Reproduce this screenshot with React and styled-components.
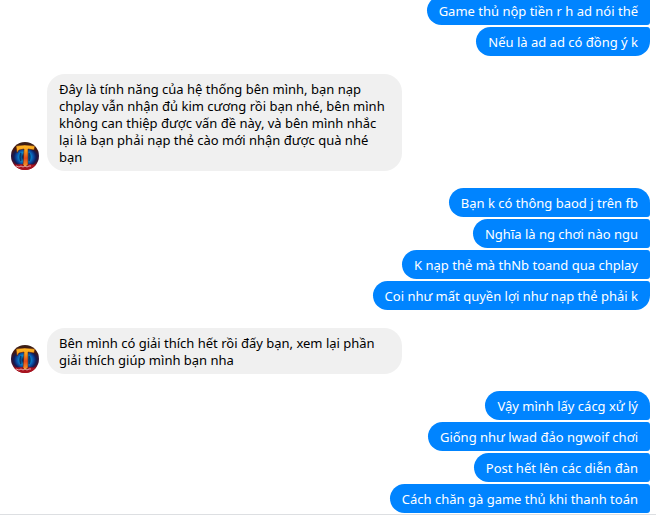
import React from "react";
import styled, { createGlobalStyle } from "styled-components";

const GlobalStyle = createGlobalStyle`
  * { box-sizing: border-box; }
  body { margin: 0; background: #fff; }
`;

const Thread = styled.main`
  display: flex;
  flex-direction: column;
  justify-content: flex-end;
  gap: 17px;
  height: 100vh;
  overflow: hidden;
  padding: 0 6px 1px 11px;
  border-bottom: 1px solid #dddfe2;
  font: 13px/17px "Segoe UI", "Noto Sans", "Open Sans", sans-serif;
`;

const SentGroup = styled.section`
  display: flex;
  flex: none;
  flex-direction: column;
  align-items: flex-end;
  gap: 2px;
  padding-bottom: ${(p) => (p.$open ? 0 : 1)}px;
`;

const Bubble = styled.p`
  margin: 0;
  padding: 7px 12px 5px;
  overflow-wrap: break-word;
`;

const SentBubble = styled(Bubble)`
  border-radius: 15px 3px 3px 15px;
  border-top-right-radius: ${(p) => (p.$first ? 15 : 3)}px;
  border-bottom-right-radius: ${(p) => (p.$last ? 15 : 3)}px;
  background: #0084ff;
  color: #fff;
`;

const ReceivedRow = styled.section`
  display: flex;
  flex: none;
  align-items: flex-end;
  gap: 8px;
`;

const ReceivedBubble = styled(Bubble)`
  width: 355px;
  border-radius: 18px;
  background: #f0f0f0;
  color: #000;
`;

const Portrait = styled.svg`
  flex: none;
  width: 28px;
  height: 28px;
  margin-bottom: 1px;
  border-radius: 50%;
`;

function Avatar({ id }) {
  return (
    <Portrait viewBox="0 0 28 28" role="img" aria-label="Game page">
      <defs>
        <radialGradient id={`${id}-glow`}>
          <stop offset="0" stopColor="#061634" />
          <stop offset=".2" stopColor="#07346c" />
          <stop offset=".42" stopColor="#0c8fd0" />
          <stop offset=".65" stopColor="#0b4da4" />
          <stop offset=".85" stopColor="#101c58" />
          <stop offset="1" stopColor="#101c50" stopOpacity="0" />
        </radialGradient>
        <linearGradient id={`${id}-base`} x1="0" y1="0" x2="0" y2="1">
          <stop offset="0" stopColor="#3a2018" />
          <stop offset=".25" stopColor="#43170f" />
          <stop offset=".45" stopColor="#2a163c" />
          <stop offset=".7" stopColor="#3a1230" />
          <stop offset=".85" stopColor="#8e0d1c" />
          <stop offset="1" stopColor="#a3121c" />
        </linearGradient>
        <linearGradient id={`${id}-gold`} x1="0" y1="0" x2="0" y2="1">
          <stop offset="0" stopColor="#ffb825" />
          <stop offset=".25" stopColor="#f9a01c" />
          <stop offset=".6" stopColor="#e2481c" />
          <stop offset="1" stopColor="#f8a02a" />
        </linearGradient>
      </defs>
      <rect width="28" height="28" fill={`url(#${id}-base)`} />
      <ellipse cx="14" cy="15" rx="13" ry="11" fill={`url(#${id}-glow)`} />
      <path d="M10 11q-2 4 0 8M18 11q2 4 0 8" fill="none" stroke="#06245a" strokeWidth="1.5" opacity=".8" />
      <path d="M3 23q11-2 22 0l-4 5H8z" fill="#a81420" />
      <path d="M5 4Q13 2 24 4l-1 4-6-1v16l-3 2-2-2 1-16-5 1-2 3z" fill={`url(#${id}-gold)`} stroke="#4b140c" strokeWidth=".5" />
      <path d="M5 24l3 1M8 25l2-1 2 1 2-1 2 1 2-1 2 0" fill="none" stroke="#f4c5c6" opacity=".8" />
    </Portrait>
  );
}

function Sent({ messages, open }) {
  return (
    <SentGroup $open={open}>
      {messages.map((text, i) => (
        <SentBubble
          key={text}
          $first={i === 0}
          $last={!open && i === messages.length - 1}
        >
          {text}
        </SentBubble>
      ))}
    </SentGroup>
  );
}

function Received({ id, children }) {
  return (
    <ReceivedRow>
      <Avatar id={id} />
      <ReceivedBubble>{children}</ReceivedBubble>
    </ReceivedRow>
  );
}

export default function App() {
  return (
    <>
      <GlobalStyle />
      <Thread lang="vi">
        <SentGroup>
          <SentBubble>Game thủ nộp tiền r h ad nói thế</SentBubble>
          <SentBubble $last>Nếu là ad ad có đồng ý k</SentBubble>
        </SentGroup>
        <Received id="first">
          Đây là tính năng của hệ thống bên mình, bạn nạp chplay vẫn nhận đủ
          kim cương rồi bạn nhé, bên mình không can thiệp được vấn đề này, và
          bên mình nhắc lại là bạn phải nạp thẻ cào mới nhận được quà nhé bạn
        </Received>
        <Sent
          messages={[
            "Bạn k có thông baod j trên fb",
            "Nghĩa là ng chơi nào ngu",
            "K nạp thẻ mà thNb toand qua chplay",
            "Coi như mất quyền lợi như nạp thẻ phải k",
          ]}
        />
        <Received id="second">
          Bên mình có giải thích hết rồi đấy bạn, xem lại phần giải thích giúp
          mình bạn nha
        </Received>
        <Sent
          open
          messages={[
            "Vậy mình lấy cácg xử lý",
            "Giống như lwad đảo ngwoif chơi",
            "Post hết lên các diễn đàn",
            "Cách chăn gà game thủ khi thanh toán",
          ]}
        />
      </Thread>
    </>
  );
}
